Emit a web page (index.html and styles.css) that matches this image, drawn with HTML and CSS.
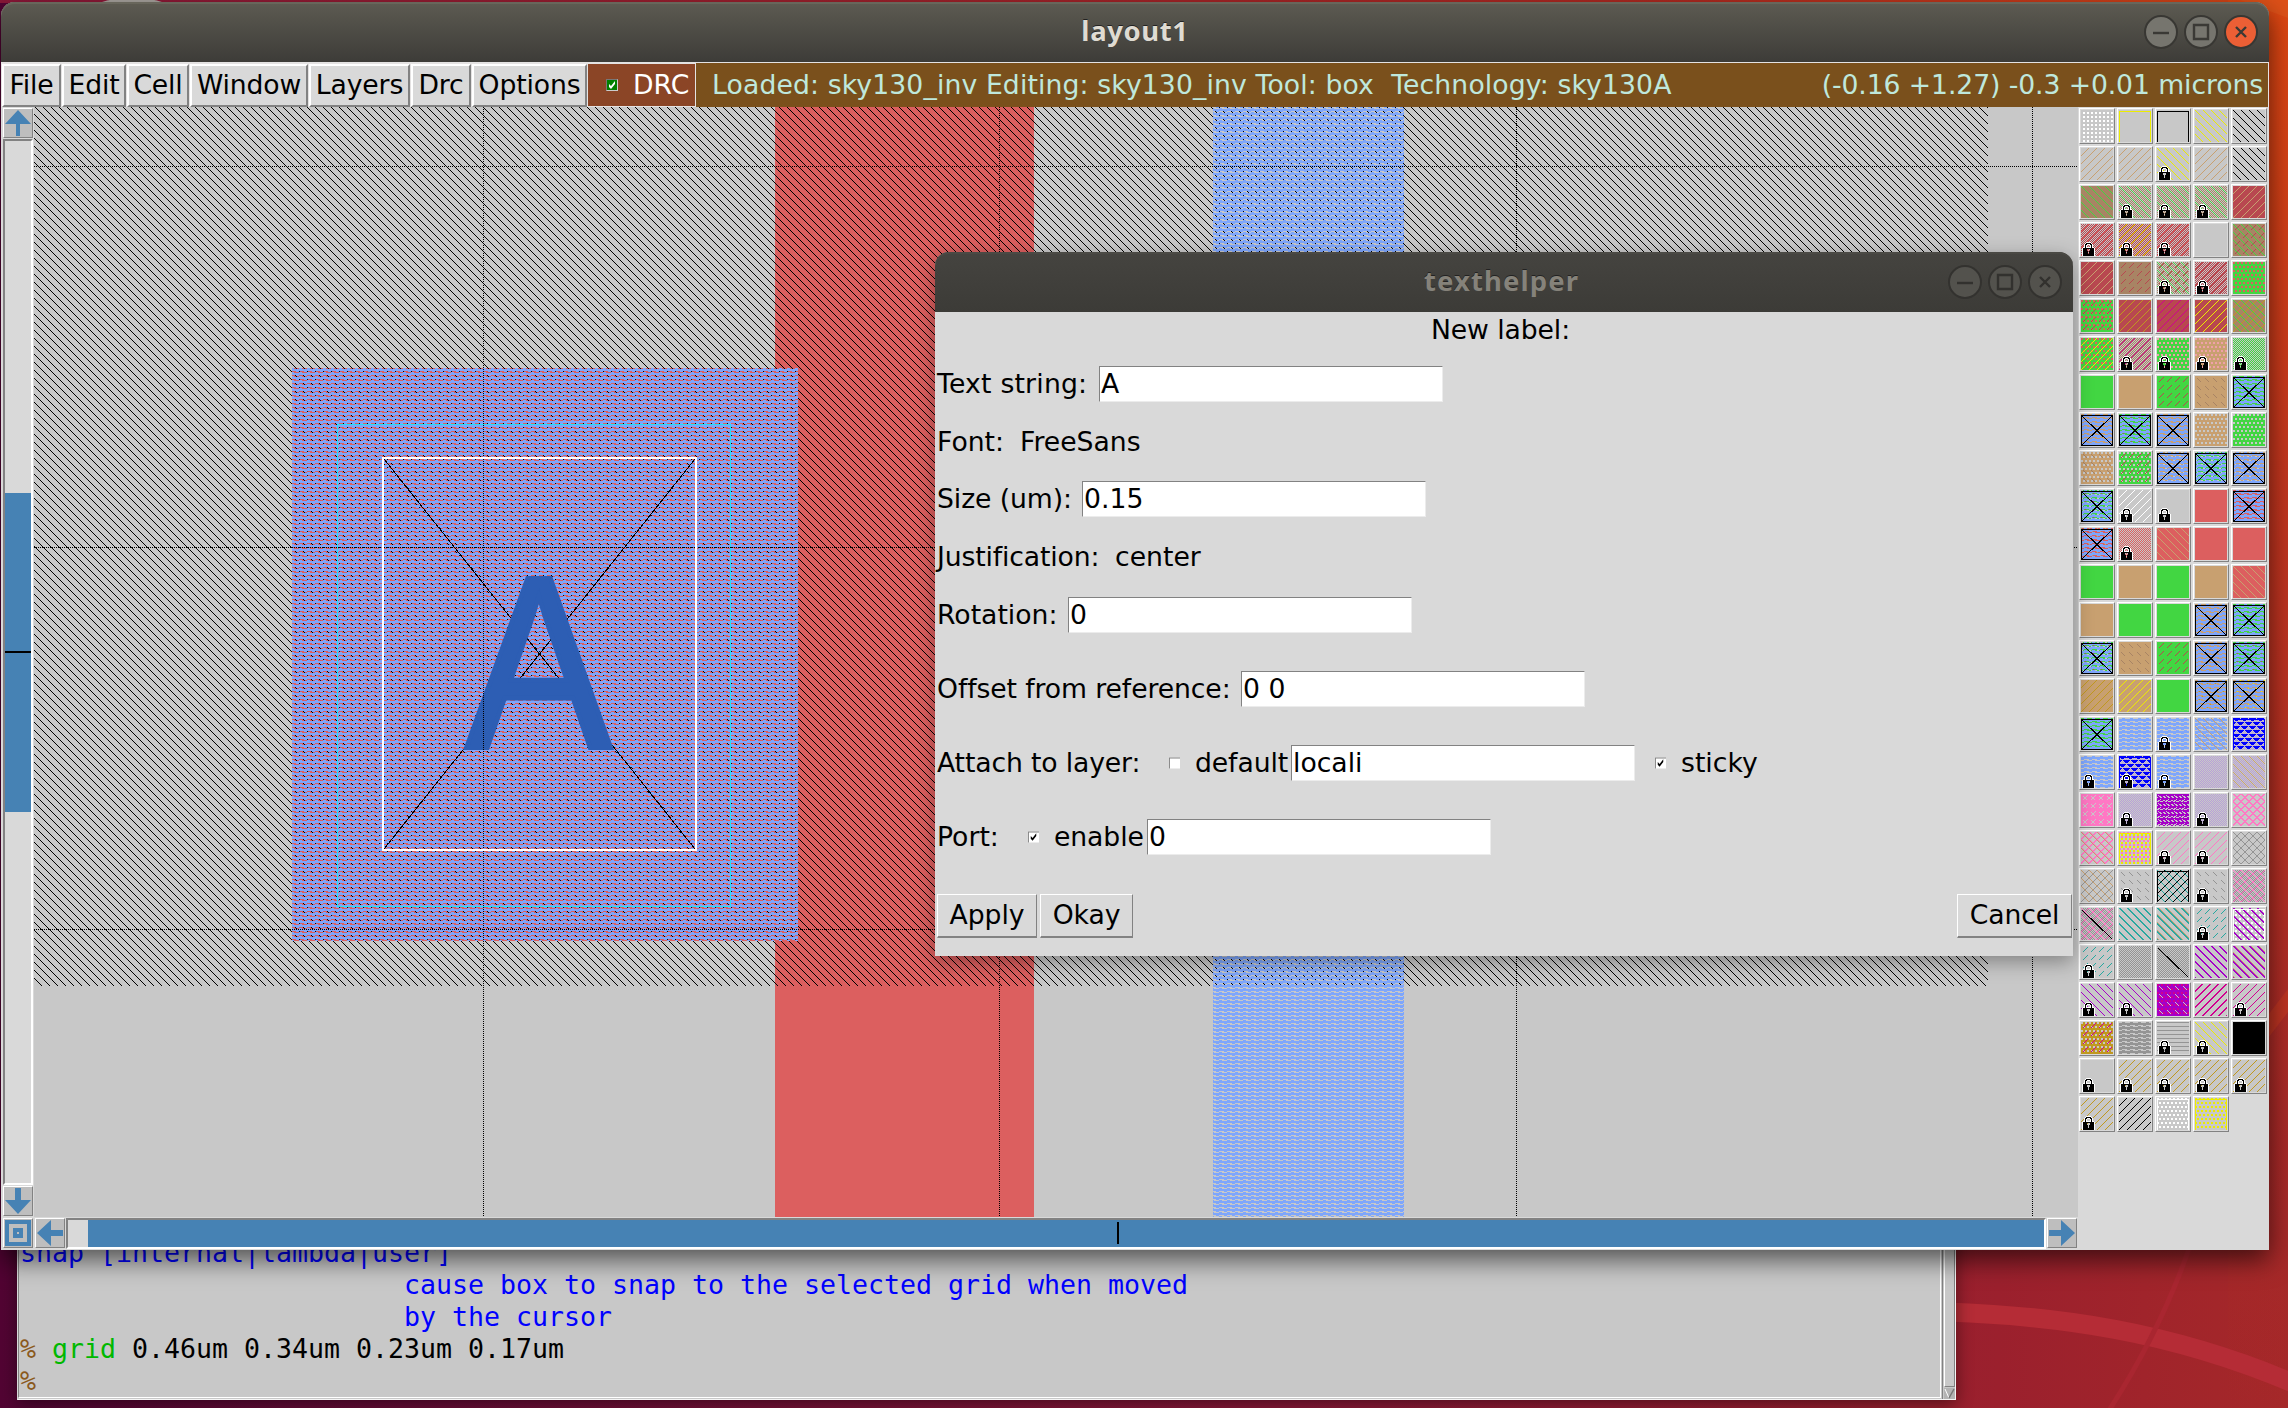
FILE: index.html
```html
<!DOCTYPE html>
<html lang="en">
<head>
<meta charset="utf-8">
<title>layout1</title>
<link rel="stylesheet" href="styles.css">
</head>
<body>
<svg class="pattern-store" width="0" height="0" aria-hidden="true"><defs id="stipples"></defs></svg>
<div class="desktop">
  <svg class="wallpaper" viewBox="0 0 2288 1408" fill="none">
    <path d="M1900 1311C2060 1312 2180 1334 2300 1386" stroke="#b52c36" stroke-width="19"/>
    <path d="M2192 1240C2172 1300 2142 1360 2106 1415" stroke="#a92630" stroke-width="5"/>
    <path d="M2250 1050L2300 985" stroke="#c6381f" stroke-width="14" opacity=".6"/>
    <path d="M2240 0H2288V18Z" fill="#dd5018"/>
    <ellipse cx="132" cy="6" rx="34" ry="8" fill="#a9a49f"/>
  </svg>

  <section class="terminal">
    <pre class="console"><span class="help">snap [internal|lambda|user]
                        cause box to snap to the selected grid when moved
                        by the cursor</span>
<span class="prompt">%</span> <span class="cmd">grid</span> 0.46um 0.34um 0.23um 0.17um
<span class="prompt">%</span></pre>
    <div class="console-scroll">
      <div class="console-thumb"></div>
      <svg width="11" height="11" viewBox="0 0 11 11" fill="none"><rect width="11" height="11" fill="#b3b3b3"/><path d="M1 1L5 10" stroke="#fff"/><path d="M5 10L10 1" stroke="#777" stroke-width="1.5"/></svg>
    </div>
  </section>

  <main class="window">
    <header class="titlebar">
      <h1 class="title">layout1</h1>
      <div class="controls">
        <svg class="ctl" viewBox="0 0 34 34"><circle class="ctl-face" cx="17" cy="17" r="16"/><path class="ctl-mark" d="M9 18H25"/></svg>
        <svg class="ctl" viewBox="0 0 34 34"><circle class="ctl-face" cx="17" cy="17" r="16"/><path class="ctl-mark" d="M10 10H24V24H10Z"/></svg>
        <svg class="ctl" viewBox="0 0 34 34"><circle class="ctl-close" cx="17" cy="17" r="16"/><path class="ctl-mark" d="M12 12L22 22M22 12L12 22"/></svg>
      </div>
    </header>

    <nav class="menubar">
      <button class="menu m-file">File</button>
      <button class="menu m-edit">Edit</button>
      <button class="menu m-cell">Cell</button>
      <button class="menu m-window">Window</button>
      <button class="menu m-layers">Layers</button>
      <button class="menu m-drc">Drc</button>
      <button class="menu m-options">Options</button>
      <div class="drc">
        <svg width="12" height="12" viewBox="0 0 12 12"><rect width="12" height="12" fill="#ccc"/><path d="M0 12V0H12L11 1H1V11Z" fill="#777"/><rect x="1" y="1" width="10" height="10" fill="#008000"/><path d="M3 5L5 7L9 2V5L5 10L3 8Z" fill="#fff"/></svg>
        <span class="drc-text">DRC</span>
      </div>
      <div class="status">
        <span class="status-left">Loaded: sky130_inv Editing: sky130_inv Tool: box&nbsp; Technology: sky130A</span>
        <span class="status-right">(-0.16 +1.27) -0.3 +0.01 microns</span>
      </div>
    </nav>

    <div class="workspace">
      <div class="vscroll">
        <div class="arrow"><svg width="26" height="26" viewBox="0 0 26 26"><path d="M13 0L26 14H15V26H11V14H0Z"/></svg></div>
        <div class="vtrough"><div class="vthumb"></div></div>
        <div class="arrow"><svg width="26" height="26" viewBox="0 0 26 26"><path d="M10 0H16V12H26L13 26L0 12H10Z"/></svg></div>
      </div>
      <svg class="layout" viewBox="34 107 2044 1110" width="2044" height="1110" shape-rendering="crispEdges">
        <rect x="34" y="107" width="2044" height="1110" fill="#c8c8c8"/>
        <rect x="775" y="107" width="259" height="1110" fill="#dc5f5f"/>
        <rect x="292" y="368" width="506" height="573" fill="#dc5f5f"/>
        <rect x="34" y="107" width="1954" height="879" fill="url(#hd-000000)"/>
        <rect x="1213" y="107" width="191" height="1110" fill="url(#li-7ea6fc)"/>
        <rect x="292" y="368" width="506" height="573" fill="url(#li-7ea6fc)"/>
        <path d="M384 459L695 849M695 459L384 849" stroke="#000" fill="none"/>
        <path d="M337.5 906.5V424.5H730.5V906.5Z" stroke="#28e0f4" fill="none"/>
        <text class="cell-label" transform="translate(538.5 746.5) scale(.888 1)" text-anchor="middle">A</text>
        <g stroke="#000" stroke-dasharray="1 1">
          <path d="M483.5 107V1217M999.5 107V1217M1516.5 107V1217M2032.5 107V1217"/>
          <path d="M34 166.5H2078M34 547.5H2078M34 929.5H2078"/>
        </g>
        <rect x="383" y="458" width="313" height="392" fill="none" stroke="#fff" stroke-width="2"/>
      </svg>
      <div class="corner"><svg width="26" height="26" viewBox="0 0 26 26"><rect width="26" height="26"/><path class="hole" d="M4 4H22V22H4ZM8 8V18H18V8Z" fill-rule="evenodd"/><rect class="hole" x="12" y="12" width="2" height="2"/></svg></div>
      <div class="hscroll">
        <div class="arrow"><svg width="26" height="26" viewBox="0 0 26 26"><path d="M0 13L14 0V10H26V16H14V26Z"/></svg></div>
        <div class="htrough"><div class="hthumb"></div></div>
        <div class="arrow"><svg width="26" height="26" viewBox="0 0 26 26"><path d="M0 10H12V0L26 13L12 26V16H0Z"/></svg></div>
      </div>
      <aside class="palette" id="palette"></aside>
    </div>
  </main>

  <section class="dialog">
    <header class="titlebar inactive">
      <h2 class="title">texthelper</h2>
      <div class="controls">
        <svg class="ctl" viewBox="0 0 34 34"><circle class="ctl-face" cx="17" cy="17" r="16"/><path class="ctl-mark" d="M9 18H25"/></svg>
        <svg class="ctl" viewBox="0 0 34 34"><circle class="ctl-face" cx="17" cy="17" r="16"/><path class="ctl-mark" d="M10 10H24V24H10Z"/></svg>
        <svg class="ctl" viewBox="0 0 34 34"><circle class="ctl-face" cx="17" cy="17" r="16"/><path class="ctl-mark" d="M12 12L22 22M22 12L12 22"/></svg>
      </div>
    </header>
    <form class="form">
      <div class="heading">New label:</div>
      <div class="row"><label class="l-text">Text string:</label><div class="entry">A</div></div>
      <div class="row"><label class="l-font">Font:</label><span>FreeSans</span></div>
      <div class="row"><label class="l-size">Size (um):</label><div class="entry">0.15</div></div>
      <div class="row"><label class="l-just">Justification:</label><span>center</span></div>
      <div class="row"><label class="l-rot">Rotation:</label><div class="entry">0</div></div>
      <div class="row tall"><label class="l-offset">Offset from reference:</label><div class="entry">0 0</div></div>
      <div class="row">
        <label class="l-attach">Attach to layer:</label>
        <svg class="check" viewBox="0 0 12 12"><rect width="12" height="12" fill="#fff"/><path d="M0 12V0H12V1H1V12Z" fill="#828282"/></svg>
        <span class="t-default">default</span><div class="entry">locali</div>
        <svg class="check c-sticky" viewBox="0 0 12 12"><rect width="12" height="12" fill="#fff"/><path d="M0 12V0H12V1H1V12Z" fill="#828282"/><path d="M3 5L5 7L9 2V5L5 10L3 8Z"/></svg>
        <span>sticky</span>
      </div>
      <div class="row tall">
        <label class="l-port">Port:</label>
        <svg class="check" viewBox="0 0 12 12"><rect width="12" height="12" fill="#fff"/><path d="M0 12V0H12V1H1V12Z" fill="#828282"/><path d="M3 5L5 7L9 2V5L5 10L3 8Z"/></svg>
        <span class="t-enable">enable</span><div class="entry">0</div>
      </div>
      <div class="actions">
        <button type="button" class="btn b-apply">Apply</button>
        <button type="button" class="btn b-okay">Okay</button>
        <button type="button" class="btn b-cancel">Cancel</button>
      </div>
    </form>
  </section>
</div>
<script src="palette.js"></script>
</body>
</html>
```
FILE: styles.css
```css
* { box-sizing: border-box; }
html, body { margin: 0; height: 100%; overflow: hidden; }
body { font-family: "DejaVu Sans", sans-serif; font-size: 26.67px; line-height: 32px; color: #000; }
button { font: inherit; color: inherit; margin: 0; padding: 0; border-radius: 0; }
svg { display: block; flex: none; }
.pattern-store { position: absolute; }

.desktop { position: relative; width: 2288px; height: 1408px; overflow: hidden;
  background:
    linear-gradient(180deg, rgba(224,72,16,.95) 0, rgba(200,56,28,.8) 500px, rgba(168,42,38,.5) 1150px, rgba(160,36,44,0) 1408px) right / 60px 100% no-repeat,
    linear-gradient(90deg, #8a1738 0, #b02a20 1700px, #d94815 2288px) top / 100% 3px no-repeat,
    linear-gradient(90deg, #520433 0, #620a36 300px, #8a1838 1300px, #9b202d 2000px, #a52829 2288px); }
.wallpaper { position: absolute; inset: 0; width: 100%; height: 100%; }

/* console */
.terminal { position: absolute; left: 17px; top: 1200px; width: 1939px; height: 200px; display: flex;
  background: #c8c8c8; border: 1px solid #f4f4f4; border-left-color: #d9d9d9; box-shadow: 0 4px 16px rgba(0,0,0,.45); }
.console { flex: 1; margin: 0 0 1px; padding: 36px 0 0 1px; overflow: hidden;
  border: 1px solid #828282; border-width: 0 1px 1px 1px; border-right-color: #fff; border-bottom-color: #fff;
  font: 26.58px/32px "DejaVu Sans Mono", monospace; }
.help { color: #0000ff; }
.prompt { color: #8b5a1e; }
.cmd { color: #00b800; }
.console-scroll { width: 13px; margin-left: 1px; padding-left: 1px; border-left: 1px solid #828282; display: flex; flex-direction: column; }
.console-thumb { flex: 1; border: 1px solid #828282; border-left-color: #fff; margin-bottom: 1px; }

/* window frames */
.window { position: absolute; left: 1px; top: 2px; width: 2268px; height: 1248px; display: flex; flex-direction: column;
  background: #d9d9d9; border-radius: 14px 14px 0 0; box-shadow: 0 10px 26px rgba(0,0,0,.6); }
.titlebar { flex: none; height: 60px; position: relative; display: flex; align-items: center; justify-content: center;
  border-radius: 14px 14px 0 0; background: linear-gradient(#5e5c52 0, #58564e 15%, #3d3c38 100%); box-shadow: inset 0 2px #68665b; }
.titlebar.inactive { background: linear-gradient(#454440, #3c3b37); box-shadow: inset 0 2px #4a4944; }
.title { margin: 0; padding-bottom: 2px; font: bold 27.5px/36px "Noto Sans", "Open Sans", sans-serif; letter-spacing: .6px; color: #dfdbd2; text-shadow: 0 -1px #222; }
.inactive .title { color: #85827a; letter-spacing: 1.1px; padding-right: 5px; }
.controls { position: absolute; right: 11px; top: 13px; display: flex; gap: 6px; }
.ctl { width: 34px; height: 34px; }
.ctl-face { fill: #76756e; stroke: #383733; stroke-width: 2; }
.ctl-close { fill: #ec5f35; stroke: #383733; stroke-width: 2; }
.ctl-mark { fill: none; stroke: #3a3935; stroke-width: 2.4; }
.inactive .ctl-face { fill: #53524d; stroke: #33322f; }
.inactive .ctl-mark { stroke: #32312e; }

/* menu bar */
.menubar { flex: none; height: 45px; display: flex; padding: 1px 1px 0 1px; background: #e4e2e2; }
.menu { height: 43px; margin-top: 1px; margin-right: 1px; padding-bottom: 2px; background: #d9d9d9; border: 2px solid; border-color: #fff #828282 #828282 #fff; text-align: center; white-space: nowrap; line-height: 36px; letter-spacing: -.15px; }
.m-file { width: 59px; } .m-edit { width: 64px; } .m-cell { width: 62px; } .m-window { width: 118px; }
.m-layers { width: 101px; } .m-drc { width: 60px; } .m-options { width: 115px; }
.drc { width: 107px; height: 42px; margin-top: 1px; background: #8b4526; color: #fff; display: flex; align-items: center; padding-left: 18px; gap: 15px; }
.drc-text { line-height: 40px; }
.status { flex: 1; margin-left: 1px; background: #7a501c; color: #bfe8dc; display: flex; justify-content: space-between; padding: 0 5px 0 16px; white-space: pre; line-height: 44px; }
.status-left { letter-spacing: .12px; }
.status-right { letter-spacing: -.1px; }

/* drawing area with scroll bars */
.workspace { flex: 1; display: grid; grid-template: 1110px 33px / 33px 2044px 1fr; }
.vscroll { display: flex; flex-direction: column; padding: 1px 1px 1px 2px; gap: 1px; }
.arrow, .corner { flex: none; width: 30px; height: 30px; padding: 1px; background: #bebebe; border: 1px solid; border-color: #fff #828282 #828282 #fff; }
.arrow svg, .corner svg { fill: #4682b4; }
.corner { margin: 1px 0 0 2px; }
.corner .hole { fill: #bebebe; }
.vtrough { flex: 1; border: 2px solid; border-color: #828282 #fff #fff #828282; padding-top: 352px; }
.vthumb { height: 319px; background: linear-gradient(#000, #000) 0 158px / 100% 2px no-repeat #4682b4; }
.hscroll { display: flex; gap: 1px; padding: 1px 1px 2px 1px; }
.htrough { flex: 1; height: 31px; border: 2px solid; border-color: #828282 #fff #fff #828282; padding-left: 20px; }
.hthumb { height: 27px; width: 1956px; background: linear-gradient(#000, #000) 1029px 2px / 2px 22px no-repeat #4682b4; }
.layout { display: block; }
.cell-label { font: 245px "Liberation Sans", sans-serif; fill: #2d5eb4; stroke: #2d5eb4; stroke-width: 5; }
.palette { grid-column: 3; grid-row: 1 / 3; display: grid; grid-template-columns: repeat(5, 36px); grid-auto-rows: 36px; gap: 2px; padding: 1px 0 0 1px; align-content: start; }
.tile { width: 36px; height: 36px; padding: 1px; border: 1px solid; border-color: #fff #828282 #828282 #fff; }

/* label dialog */
.dialog { position: absolute; left: 935px; top: 252px; width: 1138px; height: 704px; background: #d9d9d9;
  border-radius: 14px 14px 0 0; box-shadow: 0 6px 20px rgba(0,0,0,.35); }
.form { display: flex; flex-direction: column; padding: 0 1px 0 2px; white-space: nowrap; }
.heading { height: 43px; padding: 2px 8px 0 0; text-align: center; letter-spacing: -.1px; }
.row { height: 57.8px; display: flex; align-items: center; }
.row.tall { height: 90px; }
.entry { width: 344px; height: 36px; padding-left: 1px; line-height: 33px; background: #fff; border: 1px solid; border-color: #828282 #ececec #ececec #828282; }
.l-text { width: 162px; letter-spacing: .2px; } .l-font { width: 83px; } .l-size { width: 145px; letter-spacing: -.1px; }
.l-just { width: 178px; letter-spacing: -.15px; } .l-rot { width: 131px; }
.l-offset { width: 304px; letter-spacing: -.1px; } .l-attach { width: 232px; letter-spacing: -.15px; } .l-port { width: 91px; }
.check { width: 11px; height: 12px; }
.check + span { margin-left: 15px; }
.t-default { width: 96px; letter-spacing: -.1px; } .t-enable { width: 93px; letter-spacing: -.1px; }
.c-sticky { margin-left: 20px; }
.actions { height: 66px; display: flex; align-items: center; gap: 3px; margin-top: 1px; }
.btn { height: 44px; background: #d9d9d9; border: 1px solid; border-color: #fff #828282 #828282 #fff; border-bottom-width: 2px; letter-spacing: -.1px; }
.b-apply { width: 100px; } .b-okay { width: 93px; } .b-cancel { width: 115px; margin-left: auto; }
```
FILE: palette.js
```js
// Stipple masks: each returns true where an 8x8 cell is painted.
const m = (n) => ((n % 8) + 8) % 8;
const rows = (list) => (x, y) => list[y][x] === '#';
const masks = {
  solid: () => true,
  hd: (x, y) => m(x - y) === 0,
  hu: (x, y) => m(x + y) === 7,
  hds: (x, y) => m(x - y) === 2,
  hdb: (x, y) => m(x - y) < 2,
  hub: (x, y) => m(x + y) > 5,
  chk: (x, y) => (x + y) % 2 === 0,
  sl: (x, y) => m(x + y) === 7 && x > 1 && x < 7,
  bsl: (x, y) => m(x - y) === 0 && x > 1 && x < 6,
  dots: (x, y) => y % 4 < 2 && (x + (y < 4 ? 0 : 2)) % 4 < 2,
  grid: (x, y) => y % 4 > 1 && x % 4 > 1,
  xh: (x, y) => m(x - y) === 0 || m(x + y) === 7,
  xhb: (x, y) => m(x - y) < 2 || m(x + y) > 5,
  lines: (x, y) => y % 4 === 0,
  bars: rows(['########', '#.######', '##..##..', '.##..##.', '########', '###.####', '#..###..', '..#...##']),
  li: rows(['...###..', '########', '########', '###.....', '...###..', '########', '########', '###.....']),
  tri: rows(['#######.', '.#####..', '..###...', '........', '###.####', '##...###', '#.....##', '........'])
};

const C = { W: 'ffffff', K: '000000', Y: 'ecec00', T: 'c8a070', G: '42d642', R: 'dc5f5f', D: 'b84850', N: 'a88464',
  B: '7ea6fc', O: 'c09820', P: 'd00090', M: 'a500c8', V: 'b8a0d8', F: 'ff78c4', E: '28a8a0', S: '949494', L: 'c8c8c8', U: '0000ff', I: 'f0a0a8' };

const made = new Set();
const defs = document.getElementById('stipples');
function stipple(name, colour) {
  const id = name + '-' + colour;
  if (!made.has(id)) {
    made.add(id);
    let d = '';
    for (let y = 0; y < 8; y++) for (let x = 0; x < 8; x++) if (masks[name](x, y)) d += `M${x} ${y}h1v1h-1z`;
    defs.insertAdjacentHTML('beforeend', `<pattern id="${id}" width="8" height="8" patternUnits="userSpaceOnUse"><path d="${d}" fill="#${colour}" shape-rendering="crispEdges"/></pattern>`);
  }
  return `url(#${id})`;
}
stipple('hd', C.K);
stipple('li', C.B);

const padlock = ['...wwwww...', '..wbbbbbw..', '.wbbwwwbbw.', '.wbw...wbw.', '.wbw...wbw.', 'wwbwwwwwbww', 'bbbbbbbbbbb', 'bbbb...bbbb',
  'bbbb...bbbb', 'bbbbb.bbbbb', 'bbbbb.bbbbb', 'bbbbb.bbbbb', 'bbbbbbbbbbb', 'bbbbbbbbbbb'];
const ink = (ch) => padlock.map((r, y) => [...r].map((c, x) => c === ch ? `M${x + 2} ${y + 18}h1v1h-1z` : '').join('')).join('');
const lock = `<path d="${ink('w')}M1 24h1v8h-1zM13 24h1v8h-1z" fill="#fff"/><path d="${ink('b')}"/>`;

// One line per row; layers are "mask:colour", + joins layers, ! adds a padlock,
// X marks a contact, [c] a frame and \ a single diagonal.
const layers = `
grid:W|[Y|[K|hd:Y|hd:K
hu:T|hu:T|hd:Y+!|hu:T|hd:K
solid:N+hd:G|chk:N+hd:G+!|chk:N+hd:G+!|chk:N+hd:G+!|solid:D+hu:T
chk:D+hu:R+!|chk:D+hu:Y+!|chk:D+hu:R+!||solid:N+hd:G+sl:D
solid:D+hu:T|solid:N+sl:D|chk:N+hd:G+sl:D+!|chk:D+hu:D+!|solid:G+dots:R
solid:G+dots:R+sl:D|solid:D+hu:O|solid:D+hu:P|solid:D+hu:Y|solid:N+hd:G+hu:O
solid:G+dots:R+hu:Y|chk:N+hu:P+!|solid:G+dots:I+!|solid:T+dots:I+!|chk:G+!
solid:G|solid:T|solid:G+sl:D|solid:T+bsl:N|solid:G+li:B+X
solid:T+li:B+X|solid:G+sl:D+li:B+X|solid:T+li:B+X|solid:T+dots:L|solid:G+dots:L
solid:T+dots:L+bsl:N|solid:G+dots:L+sl:D|solid:T+dots:L+li:B+X|solid:G+dots:L+li:B+X|solid:T+dots:L+li:B+X
solid:G+dots:L+sl:D+li:B+X|hu:W+!|!|solid:R|solid:R+li:B+X
solid:R+hd:T+li:B+X|chk:R+!|solid:R+hd:T|solid:R|solid:R
solid:G|solid:T|solid:G|solid:T|solid:R+hd:T
solid:T|solid:G|solid:G|solid:T+li:B+X|solid:G+li:B+X
solid:G+dots:L+sl:D+li:B+X|solid:T+bsl:N|solid:G+sl:D|solid:T+li:B+X|solid:G+sl:D+li:B+X
solid:T+hu:O|solid:T+hu:Y|solid:G|solid:T+hu:O+li:B+X|solid:T+hu:Y+li:B+X
solid:G+li:B+X|li:B|li:B+!|li:B+hd:T|chk:V+tri:U+[U
li:B+!|chk:V+tri:U+[U+!|li:B+!|chk:V|chk:V+hd:T
solid:F+sl:L+bsl:L|chk:V+!|bars:M|chk:V+!|xhb:F
xhb:F+hd:T|dots:F+grid:Y+[Y|hu:F+!|hu:F+!|xh:S
xh:S+hd:T|bsl:S+!|xh:E+hd:E+hu:K+[K|bsl:S+!|chk:S+xh:F
chk:S+xh:F+\\|hdb:E|hdb:E+hds:T|sl:E+!|grid:W+hdb:M+[W
sl:E+!|chk:S+hd:S|chk:S+hd:S+\\|hdb:M|hdb:M+hds:T
hd:M+!|hd:M+!|solid:M+dots:P+bsl:L|hub:P|hu:P+!
solid:O+dots:L+sl:P|li:S|lines:S+!|hd:Y+!|solid:K
!|hu:O+!|hu:O+!|hu:O+!|hu:O+!
hu:O+!|hu:K|dots:W+[W|dots:Y+[Y`.trim().split('\n').map(r => r.split('|')).flat();

document.getElementById('palette').innerHTML = layers.map((spec) => {
  let s = '<rect width="32" height="32" fill="#c8c8c8"/>';
  for (const part of spec.split('+')) {
    if (!part) continue;
    if (part === '!') s += lock;
    else if (part === 'X') s += '<path d="M.5 1.5H31.5V31.5H.5ZM.5 1.5L31.5 31.5M31.5 1.5L.5 31.5" fill="none" stroke="#000"/><rect x="15" y="15" width="2" height="2"/>';
    else if (part === '\\') s += '<path d="M1 2L31 31" stroke="#000"/>';
    else if (part[0] === '[') s += `<path d="M.5 32V1.5H31.5V32" fill="none" stroke="#${C[part[1]]}"/>`;
    else { const [name, c] = part.split(':'); s += `<rect width="32" height="32" fill="${stipple(name, C[c])}"/>`; }
  }
  return `<div class="tile"><svg width="32" height="32" viewBox="0 0 32 32" shape-rendering="crispEdges">${s}</svg></div>`;
}).join('');
```
